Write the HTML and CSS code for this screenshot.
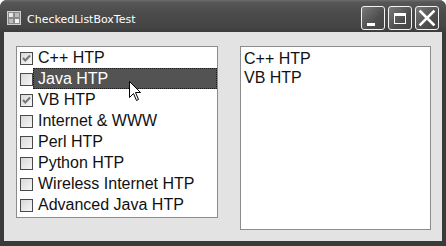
FILE: index.html
```html
<!DOCTYPE html>
<html lang="en">
<head>
    <meta charset="UTF-8">
    <title>CheckedListBoxTest</title>
    <link rel="stylesheet" href="styles.css">
</head>
<body>
    <div class="window">
        <!-- Barra de título -->
        <div class="titlebar">
            <svg class="app-icon" width="14" height="14" viewBox="0 0 14 14">
                <rect x="0.5" y="0.5" width="13" height="13" fill="#8a8a8a" stroke="#cfcfcf"/>
                <rect x="2" y="2" width="4" height="4" fill="#e8e8e8"/>
                <rect x="8" y="2" width="4" height="4" fill="#bdbdbd"/>
                <rect x="2" y="8" width="4" height="4" fill="#bdbdbd"/>
                <rect x="8" y="8" width="4" height="4" fill="#f4f4f4"/>
            </svg>
            <span class="title">CheckedListBoxTest</span>
            <div class="controls">
                <div class="ctl">
                    <svg width="22" height="22" viewBox="0 0 22 22"><rect x="5" y="16" width="8" height="3" fill="#fff"/></svg>
                </div>
                <div class="ctl">
                    <svg width="22" height="22" viewBox="0 0 22 22"><rect x="5.5" y="6.5" width="11" height="10" fill="none" stroke="#fff"/><rect x="5" y="6" width="12" height="3" fill="#fff"/></svg>
                </div>
                <div class="ctl">
                    <svg width="22" height="22" viewBox="0 0 22 22"><path d="M4.5 4.5 L17.5 17.5 M17.5 4.5 L4.5 17.5" stroke="#fff" stroke-width="2.6" stroke-linecap="square"/></svg>
                </div>
            </div>
        </div>

        <!-- Área cliente -->
        <div class="client">
            <div class="listbox checked-list">
                <div class="item"><span class="check on"></span><span class="label">C++ HTP</span></div>
                <div class="item"><span class="check"></span><span class="label selected">Java HTP</span></div>
                <div class="item"><span class="check on"></span><span class="label">VB HTP</span></div>
                <div class="item"><span class="check"></span><span class="label">Internet &amp; WWW</span></div>
                <div class="item"><span class="check"></span><span class="label">Perl HTP</span></div>
                <div class="item"><span class="check"></span><span class="label">Python HTP</span></div>
                <div class="item"><span class="check"></span><span class="label">Wireless Internet HTP</span></div>
                <div class="item"><span class="check"></span><span class="label">Advanced Java HTP</span></div>

                <!-- Cursor del ratón -->
                <svg class="cursor" width="14" height="21" viewBox="0 0 14 21">
                    <path d="M0.5 0.5 L0.5 16.5 L4.5 12.5 L7.5 19.5 L9.5 18.5 L6.5 11.5 L11.5 11.5 Z" fill="#fff" stroke="#000" stroke-linejoin="miter"/>
                </svg>
            </div>

            <div class="listbox plain-list">
                <div class="line">C++ HTP</div>
                <div class="line">VB HTP</div>
            </div>
        </div>
    </div>
</body>
</html>
```

FILE: styles.css
```css
/* Estilos globales */
body {
    margin: 0;
    background-color: #fff;
    font-family: "Liberation Sans", Arial, sans-serif;
}

/* Ventana */
.window {
    width: 446px;
    height: 246px;
    background-color: #3a3a3a;
    border-radius: 7px 7px 0 0;
    display: flex;
    flex-direction: column;
    overflow: hidden;
}

.titlebar {
    height: 32px;
    box-sizing: border-box;
    padding: 4px 7px 0 7px;
    display: flex;
    align-items: center;
    background: linear-gradient(#6e6e6e 0, #575757 2px, #4c4c4c 12px, #454545 26px, #3c3c3c 32px);
}

.app-icon {
    display: block;
    margin-top: -1px;
}

.title {
    margin-left: 6px;
    color: #fff;
    font-family: "DejaVu Sans", sans-serif;
    font-size: 11px;
    margin-top: 2px;
}

.controls {
    margin-left: auto;
    display: flex;
    gap: 3px;
}

.ctl {
    width: 24px;
    height: 24px;
    box-sizing: border-box;
    border: 1px solid #f2f2f2;
    border-radius: 3px;
    background: linear-gradient(135deg, #7a7a7a, #4e4e4e 60%, #444);
    display: flex;
    align-items: center;
    justify-content: center;
}

.ctl svg {
    display: block;
}

/* Área cliente */
.client {
    flex: 1;
    margin: 0 4px 5px 4px;
    background-color: #e3e3e3;
    display: flex;
    align-items: flex-start;
    gap: 22px;
    padding: 14px 0 0 12px;
}

.listbox {
    box-sizing: border-box;
    background-color: #fff;
    border: 1px solid #8c8c8c;
    font-size: 16px;
    color: #111;
}

/* Lista con casillas */
.checked-list {
    width: 202px;
    height: 172px;
    position: relative;
}

.item {
    height: 21px;
    display: flex;
    line-height: 21px;
}

.check {
    width: 13px;
    height: 13px;
    box-sizing: border-box;
    margin: 5px 0 0 3px;
    border: 1px solid #4a4a4a;
    background: linear-gradient(135deg, #d8d8d8, #f6f6f6);
    flex: none;
}

.check.on {
    background-image: url("data:image/svg+xml;utf8,<svg xmlns='http://www.w3.org/2000/svg' width='11' height='11'><path d='M2 5 L4.3 7.5 L9 2.5' fill='none' stroke='%23777' stroke-width='2'/></svg>"), linear-gradient(135deg, #d8d8d8, #f6f6f6);
}

.label {
    flex: 1;
    padding-left: 5px;
    white-space: nowrap;
}

.label.selected {
    background-color: #535353;
    color: #fff;
    border: 1px dotted #1a1a1a;
    padding-left: 4px;
    line-height: 19px;
}

.cursor {
    position: absolute;
    left: 112px;
    top: 34px;
}

/* Lista simple */
.plain-list {
    width: 191px;
    height: 184px;
    padding: 2px 3px;
}

.line {
    line-height: 19px;
}
```
